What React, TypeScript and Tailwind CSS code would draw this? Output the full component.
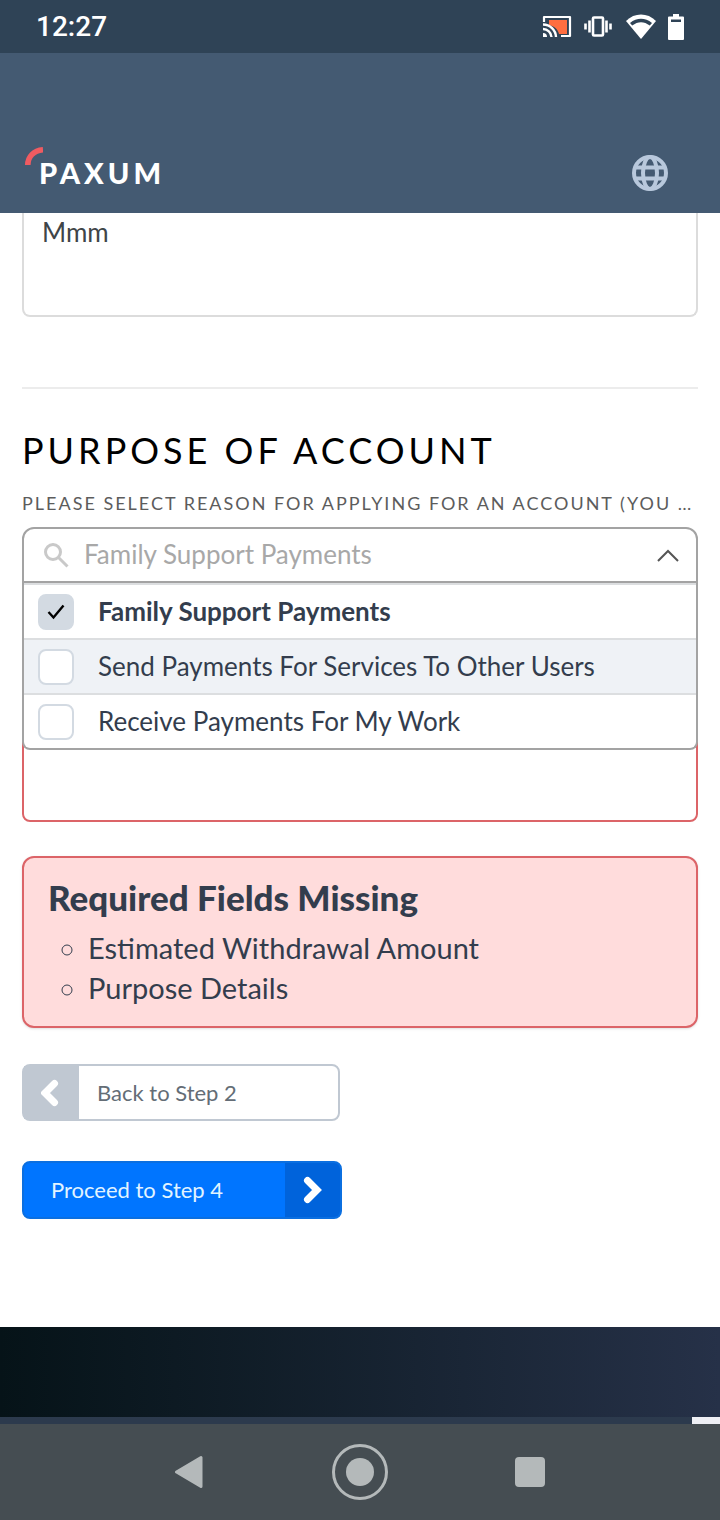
import { useState } from 'react';

const purposes = [
  { id: 'family', label: 'Family Support Payments' },
  { id: 'send', label: 'Send Payments For Services To Other Users' },
  { id: 'receive', label: 'Receive Payments For My Work' },
];

const missingFields = ['Estimated Withdrawal Amount', 'Purpose Details'];

function StatusBar() {
  return (
    <div className="flex h-[53px] items-center justify-between bg-[#2f4356] pl-9 pr-9 text-white">
      <span className="font-['Roboto',sans-serif] text-[28px] font-medium leading-8">12:27</span>
      <div className="flex items-center gap-3">
        <svg width="30" height="26" viewBox="0 0 30 26" fill="none">
          <path d="M7 6h18v14h-8c-1-5-5-8-10-9z" fill="#ff6e40" />
          <path d="M2 8V3h26v19h-9" stroke="#fff" strokeWidth="2.200" strokeLinejoin="round" />
          <path d="M1 10.500a13 13 0 0 1 13 12.500M1 15a8.500 8.500 0 0 1 8.500 8" stroke="#fff" strokeWidth="2.400" />
          <path d="M1 19a4 4 0 0 1 4 4H1z" fill="#fff" />
        </svg>
        <svg width="30" height="26" viewBox="1 0 30 26" fill="none" stroke="#fff" strokeWidth="2.600">
          <rect x="10" y="3.500" width="10" height="18" rx="1" />
          <path d="M6.500 6.500v12M2.500 9.500v6M23.500 6.500v12M27.500 9.500v6" />
        </svg>
        <svg width="30" height="26" viewBox="0 0 30 26" fill="#fff">
          <path d="M0 7C8.500-1.600 21.500-1.600 30 7L15 25z" />
          <path d="M4 9C11 3.400 19 3.400 26 9l-2.200 2.600C18 7 12 7 6.200 11.600z" fill="#2f4356" />
        </svg>
        <svg width="16" height="26" viewBox="0 0 16 26" fill="#fff">
          <path d="M5 0h6v2.500h4q1 0 1 1V25q0 1-1 1H1q-1 0-1-1V3.500q0-1 1-1h4z" />
          <path d="M3 5.500h10V8H3z" fill="#2f4356" />
        </svg>
      </div>
    </div>
  );
}

function SiteHeader() {
  return (
    <header className="flex h-40 items-end justify-between bg-[#445a72] pb-[22px] pl-[25px] pr-[52px]">
      <a href="#home" aria-label="Paxum" className="flex items-start">
        <svg width="18" height="18" viewBox="0 0 18 18" fill="none" className="-mr-1">
          <path d="M2.800 18C2.800 10 8.500 3.500 18 2.800" stroke="#f05b61" strokeWidth="5.600" />
        </svg>
        <span className="pt-2 font-['Lato',sans-serif] text-[29px] font-black leading-9 tracking-[4px] text-white">
          PAXUM
        </span>
      </a>
      <button type="button" aria-label="Change language">
        <svg width="36" height="36" viewBox="0 0 36 36" fill="none" stroke="#b8c8dc" strokeWidth="4">
          <circle cx="18" cy="18" r="16" />
          <ellipse cx="18" cy="18" rx="7" ry="16" />
          <path d="M4 12.500h28M4 23.500h28" />
        </svg>
      </button>
    </header>
  );
}

function PurposeSelect() {
  const [query, setQuery] = useState('');
  const [open, setOpen] = useState(true);
  const [selected, setSelected] = useState<string[]>(['family']);

  const toggle = (id: string) => {
    setSelected((previous) =>
      previous.includes(id) ? previous.filter((item) => item !== id) : [...previous, id],
    );
  };

  return (
    <div className="relative z-10">
      <div className="flex h-14 items-center rounded-t-xl border-2 border-[#a3a3a3] bg-white pl-5 pr-4">
        <svg width="26" height="26" viewBox="0 0 26 26" fill="none" stroke="#c9c9c9" strokeWidth="3">
          <circle cx="9" cy="10" r="7.500" />
          <path d="m14.500 15.500 9 9" />
        </svg>
        <input
          id="purpose"
          value={query}
          onChange={(event) => setQuery(event.target.value)}
          placeholder="Family Support Payments"
          className="ml-3.5 min-w-0 flex-1 pb-0.5 text-[26px] leading-8 outline-none placeholder:text-[#a8a8a8]"
        />
        <button type="button" aria-label="Toggle options" onClick={() => setOpen((value) => !value)}>
          <svg width="24" height="24" viewBox="0 0 24 24" fill="none" stroke="#555" strokeWidth="2">
            <path d="m2 18 10-10 10 10" />
          </svg>
        </button>
      </div>

      {open && (
        <ul className="absolute inset-x-0 top-full rounded-b-lg border-2 border-t-0 border-[#a3a3a3] bg-white">
          {purposes.map(({ id, label }) => {
            const checked = selected.includes(id);
            return (
              <li key={id} className="border-t-2 border-[#dcdee0] even:bg-[#eff2f6]">
                <label
                  className={`flex h-[53px] items-center gap-6 pl-3.5 text-[26px] leading-8 text-[#333d4d] ${
                    checked ? 'font-bold' : ''
                  }`}
                >
                  <span className="grid place-items-center">
                    <input
                      type="checkbox"
                      checked={checked}
                      onChange={() => toggle(id)}
                      className="col-start-1 row-start-1 size-9 appearance-none rounded-lg border-2 border-[#d3dae2] bg-white checked:bg-[#d3dae2]"
                    />
                    {checked && (
                      <svg
                        width="18"
                        height="16"
                        viewBox="0 0 18 16"
                        fill="none"
                        stroke="#000"
                        strokeWidth="2.400"
                        className="pointer-events-none col-start-1 row-start-1"
                      >
                        <path d="m1.500 8 5 5.500L16.500 1.500" />
                      </svg>
                    )}
                  </span>
                  <span className="pb-0.5">{label}</span>
                </label>
              </li>
            );
          })}
        </ul>
      )}
    </div>
  );
}

function MissingFields() {
  return (
    <section className="mt-[34px] rounded-xl border-2 border-[#dc6468] bg-[#ffdcdc] px-6 pb-[18px] pt-[18px] text-[#333d4d] shadow-sm">
      <h2 className="text-[35px] font-black leading-[42px]">Required Fields Missing</h2>
      <ul className="mt-2.5 list-[circle] pl-10 text-[29px] leading-10">
        {missingFields.map((field) => (
          <li key={field}>{field}</li>
        ))}
      </ul>
    </section>
  );
}

function SystemNav() {
  return (
    <nav className="flex h-24 items-center justify-center gap-[127px] bg-[#454d52]">
      <button type="button" aria-label="Back">
        <svg width="30" height="34" viewBox="0 0 30 34" fill="#b4b9ba" stroke="#b4b9ba" strokeWidth="3" strokeLinejoin="round">
          <path d="M1.500 17 26 2.500v29z" />
        </svg>
      </button>
      <button type="button" aria-label="Home">
        <svg width="56" height="56" viewBox="0 0 56 56">
          <circle cx="28" cy="28" r="26.500" fill="none" stroke="#b4b9ba" strokeWidth="3" />
          <circle cx="28" cy="28" r="14" fill="#b4b9ba" />
        </svg>
      </button>
      <button type="button" aria-label="Recent apps" className="size-[30px] rounded-sm bg-[#b4b9ba]" />
    </nav>
  );
}

export default function App() {
  const [details, setDetails] = useState('');
  const [notes, setNotes] = useState('Mmm');

  return (
    <div className="flex min-h-screen flex-col bg-white font-['Lato','Liberation_Sans',sans-serif]">
      <StatusBar />
      <SiteHeader />

      <main className="flex-1 px-[22px]">
        <textarea
          aria-label="Notes"
          value={notes}
          onChange={(event) => setNotes(event.target.value)}
          className="block h-[104px] w-full resize-none rounded-b-lg border-2 border-t-0 border-[#dcdcdc] px-[18px] pt-[3px] text-[26px] leading-8 text-[#3f4548] outline-none"
        />
        <hr className="mt-[70px] border-t-2 border-[#ececec]" />

        <h1 className="mt-[38px] text-4xl leading-[46px] tracking-[4px] text-black">PURPOSE OF ACCOUNT</h1>
        <label
          htmlFor="purpose"
          className="mb-3 mt-[18px] block truncate text-lg leading-6 tracking-[2px] text-[#5c5c5c]"
        >
          PLEASE SELECT REASON FOR APPLYING FOR AN ACCOUNT (YOU CAN SELECT MORE THAN ONE)
        </label>
        <PurposeSelect />

        <textarea
          aria-label="Purpose details"
          value={details}
          onChange={(event) => setDetails(event.target.value)}
          className="mt-[100px] block h-[139px] w-full resize-none rounded-lg border-2 border-[#dc6468] px-[18px] py-2 text-[26px] leading-8 outline-none"
        />

        <MissingFields />

        <div className="mb-[108px] mt-9 flex flex-col items-start gap-10 text-[22px] leading-7">
          <button
            type="button"
            className="flex h-[57px] w-[318px] items-stretch rounded-lg border-2 border-[#c0c8d2] bg-white text-left text-[#646d76]"
          >
            <span className="flex w-[55px] items-center justify-center bg-[#c0c8d2]">
              <svg width="22" height="28" viewBox="0 0 22 28" fill="none" stroke="#fff" strokeWidth="7" strokeLinecap="round">
                <path d="M13.500 4.500 4 14l9.500 9.500" />
              </svg>
            </span>
            <span className="self-center pl-[18px]">Back to Step 2</span>
          </button>
          <button
            type="button"
            className="flex h-[58px] w-80 items-stretch justify-between overflow-hidden rounded-lg border-2 border-[#0b6fe0] bg-[#0075ff] text-left text-[#e2f4ff]"
          >
            <span className="self-center pl-[27px]">Proceed to Step 4</span>
            <span className="flex w-[55px] items-center justify-center bg-[#0063db]">
              <svg width="22" height="28" viewBox="0 0 22 28" fill="none" stroke="#fff" strokeWidth="7" strokeLinecap="round">
                <path d="m5.500 4.500 9.500 9.500-9.500 9.500" />
              </svg>
            </span>
          </button>
        </div>
      </main>

      <footer className="h-[90px] bg-linear-to-r from-[#061318] to-[#263148]" />
      <div className="flex h-[7px] justify-end bg-[#2c3a4d]">
        <div className="w-7 bg-[#eeeff4]" />
      </div>
      <SystemNav />
    </div>
  );
}
